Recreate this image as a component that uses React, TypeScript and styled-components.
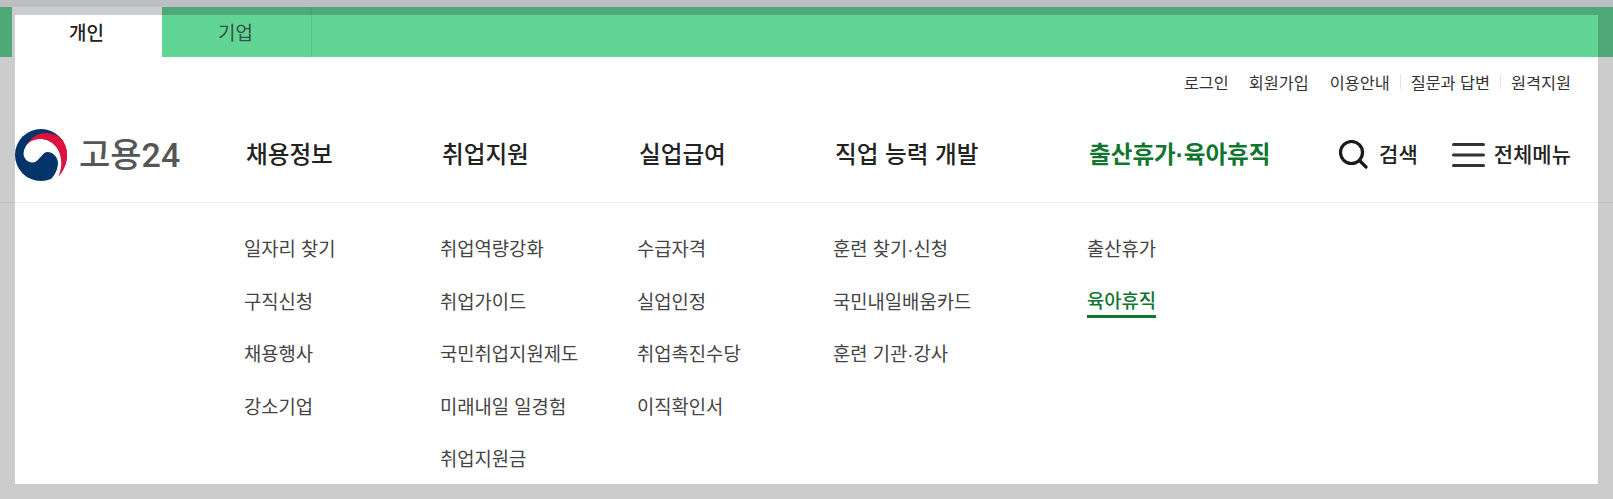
import React from "react";
import styled, { createGlobalStyle } from "styled-components";

const Global = createGlobalStyle`
  html, body { margin: 0; padding: 0; background: #cccccc; }
  body { font-family: "Liberation Sans", "Noto Sans CJK KR", sans-serif; }
  #root { height: 499px; overflow: hidden; }
  ul { list-style: none; margin: 0; padding: 0; }
  a { color: inherit; text-decoration: none; }
`;

const Page = styled.div`
  position: relative;
  width: 1613px;
  height: 499px;
  background: #cccccc;
  overflow: hidden;
`;
const TopStrip = styled.div`
  height: 7px;
  background: #bbbfc2;
`;
const BackBand = styled.div`
  height: 50px;
  display: flex;
  background: #4fa877;
`;
const BackEdge = styled.div`
  width: 12px;
`;
const BackActiveTab = styled.div`
  width: 150px;
  background: #cccccc;
`;
const BackTab = styled.div`
  width: 149px;
  border-right: 1px solid #46a06e;
`;
const BackRule = styled.div`
  margin-top: 145px;
  height: 1px;
  background: #c0c0c0;
`;

const Panel = styled.div`
  position: absolute;
  left: 15px;
  top: 15px;
  width: 1583px;
  height: 469px;
  background: #ffffff;
  display: flex;
  flex-direction: column;
`;
const TabBar = styled.div`
  height: 42px;
  flex: none;
  display: flex;
  background: #60d594;
`;
const Tab = styled.a<{ $active?: boolean }>`
  width: ${(p) => (p.$active ? "147px" : "150px")};
  display: flex;
  align-items: center;
  justify-content: center;
  padding-bottom: 10px;
  padding-right: ${(p) => (p.$active ? "4px" : "2px")};
  box-sizing: border-box;
  font-size: 19px;
  font-weight: ${(p) => (p.$active ? 500 : 400)};
  color: ${(p) => (p.$active ? "#222222" : "#3d4f44")};
  background: ${(p) => (p.$active ? "#ffffff" : "transparent")};
  border-right: ${(p) => (p.$active ? "none" : "1px solid #55c487")};
`;
const UtilBar = styled.ul`
  height: 50px;
  flex: none;
  display: flex;
  align-items: center;
  justify-content: flex-end;
  padding: 0 27px 0 0;
  font-size: 16.3px;
  color: #333333;
  box-sizing: border-box;
`;
const UtilItem = styled.li<{ $sep?: boolean; $gap: number }>`
  display: flex;
  align-items: center;
  margin-left: ${(p) => p.$gap}px;
  &::before {
    content: "";
    display: ${(p) => (p.$sep ? "block" : "none")};
    width: 1px;
    height: 14px;
    background: #e4e4e4;
    margin-right: 10px;
  }
`;
const columns = "229px 196px 197px 196px 254px 1fr";
const Header = styled.div`
  height: 96px;
  flex: none;
  display: grid;
  grid-template-columns: ${columns};
  align-items: center;
  border-bottom: 1px solid #eeeeee;
  box-sizing: border-box;
  position: relative;
`;
const Logo = styled.a`
  display: flex;
  align-items: center;
  gap: 12px;
`;
const LogoText = styled.span`
  font-family: Roboto, "Noto Sans CJK KR", sans-serif;
  font-size: 34px;
  font-weight: 500;
  color: #565656;
  line-height: 1;
  white-space: nowrap;
`;
const NavTitle = styled.a<{ $on?: boolean }>`
  font-size: 23.6px;
  font-weight: ${(p) => (p.$on ? 700 : 500)};
  padding: 0 0 4px 2px;
  white-space: nowrap;
  color: ${(p) => (p.$on ? "#10762f" : "#222222")};
`;
const Tools = styled.div`
  position: absolute;
  right: 27px;
  top: 0;
  bottom: 0;
  display: flex;
  align-items: center;
`;
const Tool = styled.a<{ $gap: number }>`
  display: flex;
  align-items: center;
  gap: ${(p) => p.$gap}px;
  margin-left: 34px;
  font-size: 21px;
  font-weight: 500;
  color: #222222;
`;
const ToolLabel = styled.span`
  padding-bottom: 4px;
`;
const SubGrid = styled.div`
  flex: 1;
  display: grid;
  grid-template-columns: ${columns};
  padding-top: 32px;
`;
const SubList = styled.ul`
  display: flex;
  flex-direction: column;
  gap: 22.5px;
`;
const SubItem = styled.li`
  height: 30px;
  display: flex;
  align-items: center;
`;
const SubLink = styled.a<{ $on?: boolean }>`
  font-size: 18.8px;
  line-height: 26px;
  white-space: nowrap;
  font-weight: ${(p) => (p.$on ? 500 : 400)};
  color: ${(p) => (p.$on ? "#10762f" : "#444444")};
  border-bottom: ${(p) => (p.$on ? "3px solid #10762f" : "none")};
  ${(p) => (p.$on ? "margin-top: 1px;" : "")}
`;

const Taegeuk = () => (
  <svg width="52" height="52" viewBox="0 0 52 52">
    <circle cx="26" cy="26" r="26" fill="#03356b" />
    <path
      d="M10.500 18C14 10 22 4 31 4C36 4 41 5.500 45 8.500C50 13 52 20 52 26C52 34 49 42 43 48C46 42 47 36 46 30C45 19 36 10 25 10C18 10 13.500 13.500 10.500 18Z"
      fill="#e2103c"
    />
    <path
      d="M8.500 25C9 15 17 10 25 10C36 10 45 19 46 30C47 36 46 42 43 48L36 50C40 46 43 40 43 33C42 27 37 22.500 32 23C27 23.500 24 33 18 33.500C13 34 9 30 8.500 25Z"
      fill="#ffffff"
    />
  </svg>
);

const SearchIcon = () => (
  <svg width="29" height="29" viewBox="0 0 29 29" fill="none" stroke="#1a1a1a" strokeWidth="3.2" strokeLinecap="round">
    <circle cx="12.500" cy="12.500" r="11" />
    <line x1="20.500" y1="20.500" x2="27" y2="27" />
  </svg>
);
const MenuIcon = () => (
  <svg width="33" height="24" viewBox="0 0 33 24" stroke="#333333" strokeWidth="3" strokeLinecap="round">
    <line x1="1.500" y1="1.500" x2="31.500" y2="1.500" />
    <line x1="1.500" y1="12" x2="31.500" y2="12" />
    <line x1="1.500" y1="22.500" x2="31.500" y2="22.500" />
  </svg>
);

const util = [
  { t: "로그인", gap: 0 },
  { t: "회원가입", gap: 20 },
  { t: "이용안내", gap: 21 },
  { t: "질문과 답변", gap: 10, sep: true },
  { t: "원격지원", gap: 10, sep: true },
];
const nav = [
  { t: "채용정보", sub: ["일자리 찾기", "구직신청", "채용행사", "강소기업"] },
  { t: "취업지원", sub: ["취업역량강화", "취업가이드", "국민취업지원제도", "미래내일 일경험", "취업지원금"] },
  { t: "실업급여", sub: ["수급자격", "실업인정", "취업촉진수당", "이직확인서"] },
  { t: "직업 능력 개발", sub: ["훈련 찾기·신청", "국민내일배움카드", "훈련 기관·강사"] },
  { t: "출산휴가·육아휴직", on: true, sub: ["출산휴가", "육아휴직"] },
];

export default function App() {
  return (
    <Page>
      <Global />
      <TopStrip />
      <BackBand>
        <BackEdge />
        <BackActiveTab />
        <BackTab />
      </BackBand>
      <BackRule />
      <Panel>
        <TabBar>
          <Tab $active>개인</Tab>
          <Tab>기업</Tab>
        </TabBar>
        <UtilBar>
          {util.map((u) => (
            <UtilItem key={u.t} $sep={u.sep} $gap={u.gap}>
              {u.t}
            </UtilItem>
          ))}
        </UtilBar>
        <Header>
          <Logo>
            <Taegeuk />
            <LogoText>고용24</LogoText>
          </Logo>
          {nav.map((n) => (
            <NavTitle key={n.t} $on={n.on}>
              {n.t}
            </NavTitle>
          ))}
          <Tools>
            <Tool $gap={11}>
              <SearchIcon />
              <ToolLabel>검색</ToolLabel>
            </Tool>
            <Tool $gap={9}>
              <MenuIcon />
              <ToolLabel>전체메뉴</ToolLabel>
            </Tool>
          </Tools>
        </Header>
        <SubGrid>
          <div />
          {nav.map((n) => (
            <SubList key={n.t}>
              {n.sub.map((s) => {
                const on = s === "육아휴직";
                return (
                  <SubItem key={s}>
                    <SubLink $on={on}>{s}</SubLink>
                  </SubItem>
                );
              })}
            </SubList>
          ))}
        </SubGrid>
      </Panel>
    </Page>
  );
}
